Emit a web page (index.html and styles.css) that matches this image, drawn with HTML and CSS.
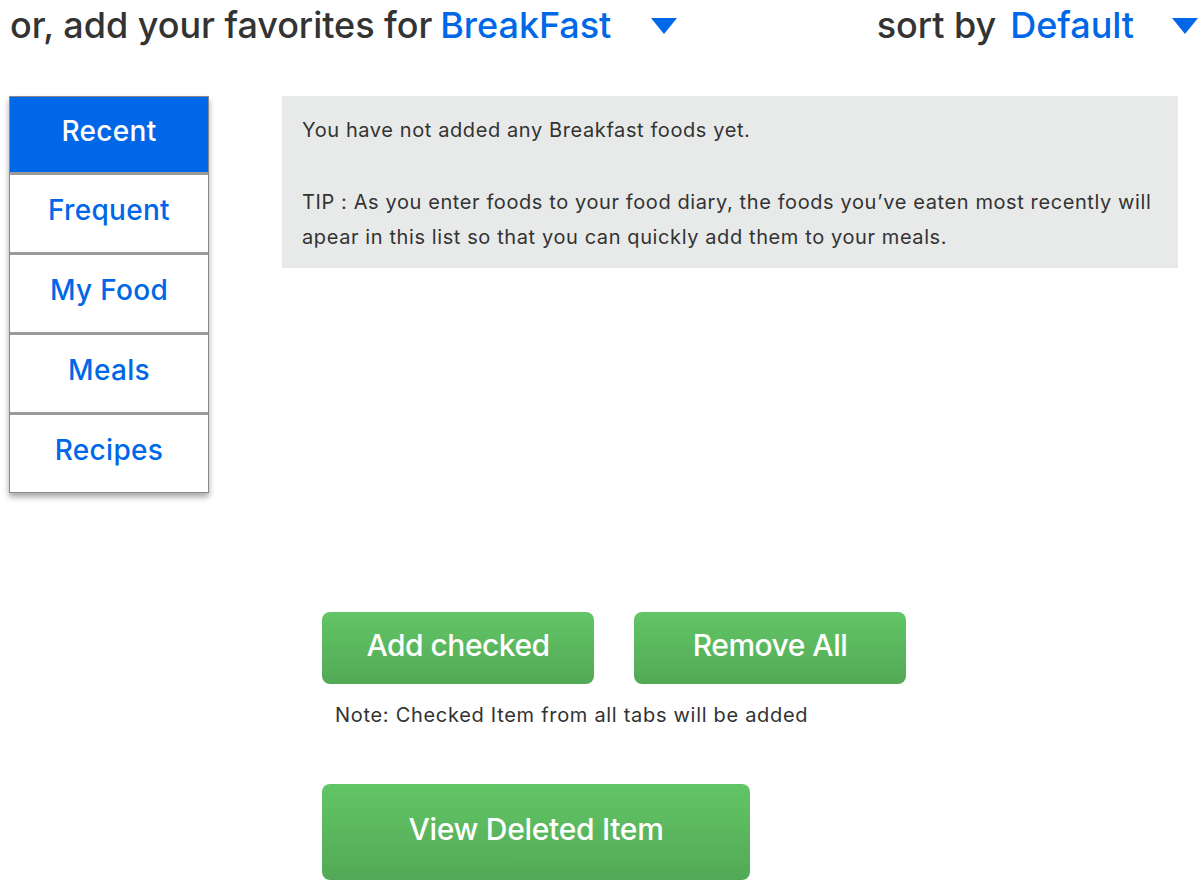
FILE: index.html
```html
<!DOCTYPE html>
<html>
<head>
<meta charset="utf-8">
<link rel="stylesheet" href="styles.css">
</head>
<body>
<div class="header">
  <div class="pick">
    <span class="label">or, add your favorites for</span>
    <span class="value">BreakFast</span>
    <svg class="caret caret-left" width="26" height="16" viewBox="0 0 26 16"><polygon points="0,0 26,0 13,16" fill="#0068E8"/></svg>
  </div>
  <div class="pick">
    <span class="label">sort by</span>
    <span class="value sort">Default</span>
    <svg class="caret caret-right" width="26" height="16" viewBox="0 0 26 16"><polygon points="0,0 26,0 13,16" fill="#0068E8"/></svg>
  </div>
</div>

<div class="main">
  <div class="tabs">
    <div class="tab active">Recent</div>
    <div class="tab">Frequent</div>
    <div class="tab">My Food</div>
    <div class="tab">Meals</div>
    <div class="tab">Recipes</div>
  </div>
  <div class="tip">
    <p class="tip-line">You have not added any Breakfast foods yet.</p>
    <p class="tip-text">TIP : As you enter foods to your food diary, the foods you’ve eaten most recently will apear in this list so that you can quickly add them to your meals.</p>
  </div>
</div>

<div class="actions">
  <div class="btn-row">
    <button class="btn">Add checked</button>
    <button class="btn">Remove All</button>
  </div>
  <p class="note">Note: Checked Item from all tabs will be added</p>
  <button class="btn btn-big">View Deleted Item</button>
</div>
</body>
</html>
```

FILE: styles.css
```css
* { box-sizing: border-box; }
body {
  margin: 0;
  font-family: Inter, "Noto Sans", sans-serif;
  color: #333333;
  background: #ffffff;
}
.header {
  display: flex;
  justify-content: space-between;
  align-items: center;
  height: 50px;
  padding: 0 5px 0 10px;
}
.pick {
  display: flex;
  align-items: center;
  font-size: 36px;
  font-weight: 500;
  letter-spacing: -0.05px;
}
.label { color: #333333; }
.value { color: #0068E8; margin-left: 8px; }
.value.sort { margin-left: 14px; }
.caret-left { margin-left: 40px; margin-top: 2px; }
.caret-right { margin-left: 38px; margin-top: 2px; }

.main {
  display: flex;
  align-items: flex-start;
  margin-top: 46px;
  padding-left: 9px;
}
.tabs {
  width: 200px;
  border: 1px solid #8a8a8a;
  background: #9a9a9a;
  box-shadow: 0 4px 6px rgba(0,0,0,0.35);
  display: flex;
  flex-direction: column;
  gap: 3px;
}
.tab {
  height: 77px;
  background: #ffffff;
  color: #0068E8;
  font-size: 28px;
  font-weight: 500;
  letter-spacing: 0.3px;
  display: flex;
  align-items: center;
  justify-content: center;
  padding-bottom: 8px;
}
.tab.active {
  height: 75px;
  background: #0068E8;
  color: #ffffff;
}
.tip {
  margin-left: 73px;
  width: 896px;
  background: #E8EAE9;
  padding: 17px 20px 13px 20px;
  font-size: 20px;
  line-height: 35px;
  color: #333333;
  letter-spacing: 0.6px;
}
.tip p { margin: 0; }
.tip-line { margin-bottom: 37px !important; }

.actions {
  padding-left: 322px;
  margin-top: 119px;
}
.btn-row {
  display: flex;
  gap: 40px;
}
.btn {
  width: 272px;
  height: 72px;
  border: none;
  border-radius: 8px;
  background: linear-gradient(#62C566, #53A956);
  color: #ffffff;
  font-family: Inter, "Noto Sans", sans-serif;
  font-size: 30px;
  font-weight: 500;
  letter-spacing: -0.5px;
  padding: 0 0 6px 0;
  display: flex;
  align-items: center;
  justify-content: center;
}
.btn-big {
  margin-top: 57px;
  width: 428px;
  height: 96px;
  letter-spacing: -0.3px;
}
.note {
  margin: 19px 0 0 13px;
  font-size: 20px;
  color: #333333;
  letter-spacing: 0.7px;
}
```
